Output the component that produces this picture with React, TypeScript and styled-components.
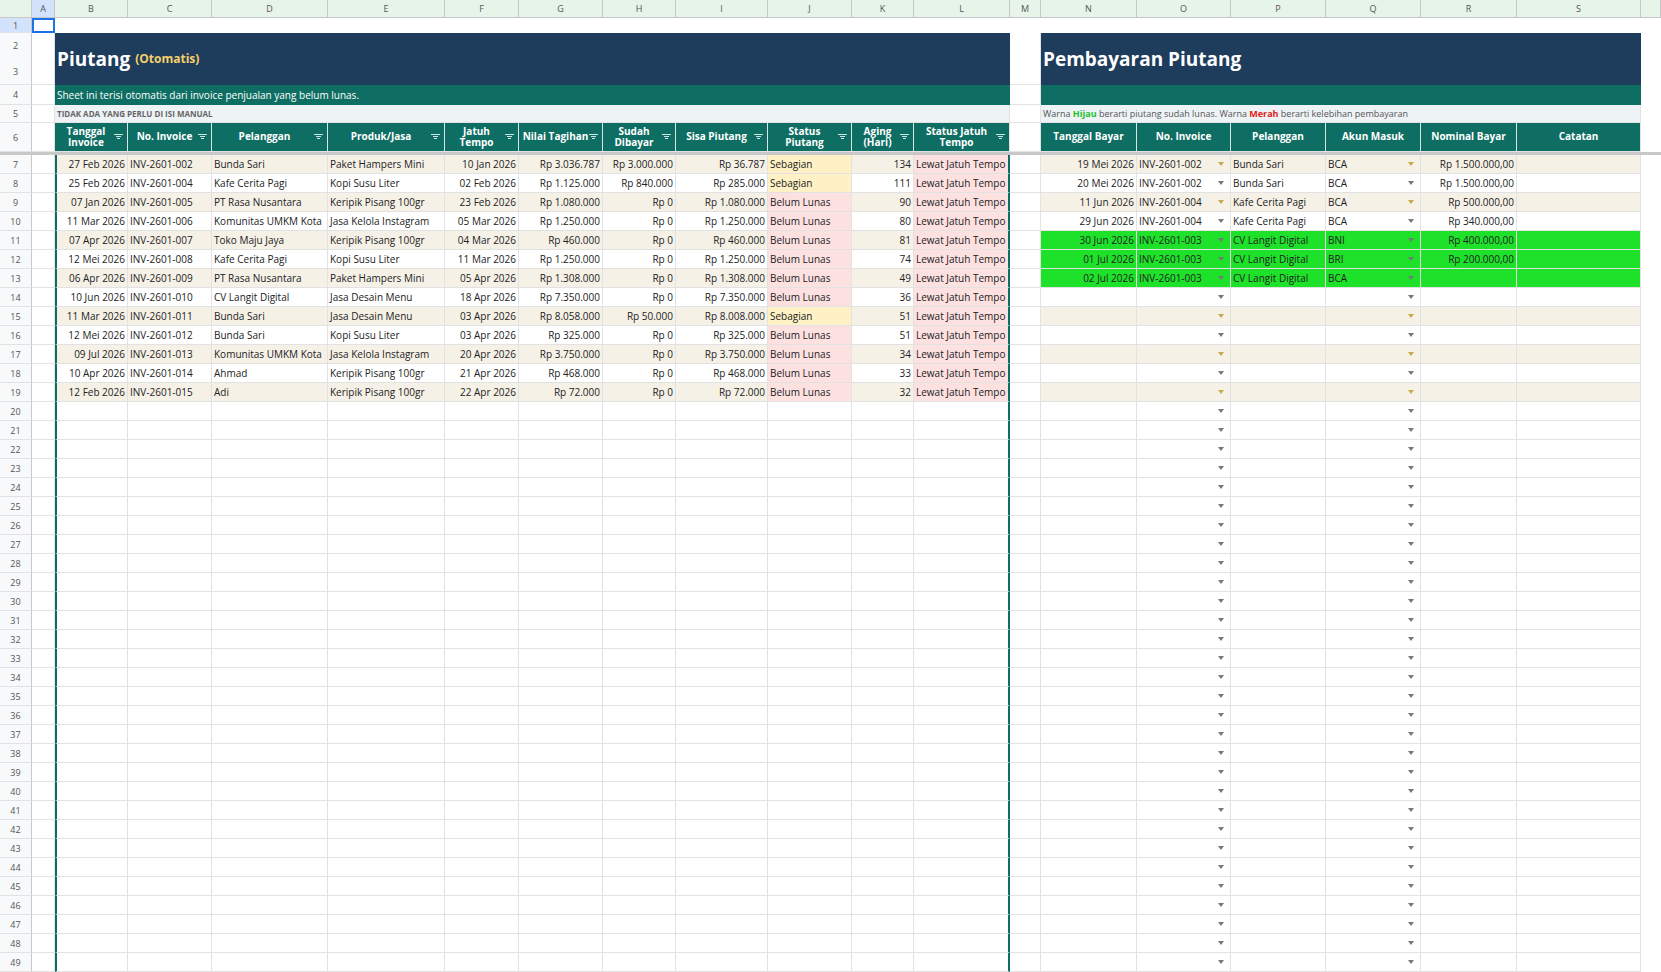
import React from "react";
import styled, { createGlobalStyle } from "styled-components";

const G = createGlobalStyle`
  body{margin:0;background:#fff;font-family:"Open Sans","Noto Sans",sans-serif;overflow:hidden;}
`;
const W = [32,23,73,84,116,117,74,84,73,92,84,62,96,31,96,94,95,95,96,124,20];
const letters = ["","A","B","C","D","E","F","G","H","I","J","K","L","M","N","O","P","Q","R","S",""];
const tpl = W.map(w=>w+"px").join(" ");

const Row = styled.div<{h:number;sep?:boolean}>`
  display:grid;grid-template-columns:${tpl};height:${p=>p.h}px;
  ${p=>p.sep?"border-bottom:3px solid #c8c8c8;":""}
`;
const Cell = styled.div<{bg?:string;align?:string;span?:number;c?:string;b?:boolean;fs?:number;nb?:boolean}>`
  grid-column:span ${p=>p.span||1};
  background:${p=>p.bg||"#fff"};
  border-right:1px solid ${p=>p.nb?"transparent":"#e2e2e2"};
  border-bottom:1px solid ${p=>p.nb?"transparent":"#e2e2e2"};
  display:flex;align-items:center;justify-content:${p=>p.align==="r"?"flex-end":p.align==="c"?"center":"flex-start"};
  padding:0 2px;box-sizing:border-box;overflow:hidden;white-space:nowrap;position:relative;
  font-size:${p=>p.fs||10}px;color:${p=>p.c||"#222"};font-weight:${p=>p.b?700:400};
`;
const RowHead = styled(Cell)<{sel?:boolean}>`
  background:${p=>p.sel?"#d3e3fd":"#f8f9fa"};justify-content:center;font-size:9px;color:#555;border-right:1px solid #c7c7c7;
`;
const RowHead2 = styled(RowHead)`flex-direction:column;justify-content:space-around;`;
const ColHead = styled(Cell)<{sel?:boolean}>`
  background:${p=>p.sel?"#d3e3fd":"#e6f4ea"};justify-content:center;font-size:9px;color:#555;border-right:1px solid #c7c7c7;border-bottom:1px solid #c7c7c7;
`;
const Hdr = styled(Cell)`
  background:#0f6e63;color:#fff;font-weight:700;justify-content:center;text-align:center;line-height:1.15;border-right:1px solid #d9e6e3;font-size:10px;padding-right:12px;
`;
const Filter = styled.span`
  position:absolute;right:4px;top:50%;transform:translateY(-50%);width:9px;height:6px;
  background:linear-gradient(#cfe5e0,#cfe5e0) 0 0/9px 1px no-repeat,linear-gradient(#cfe5e0,#cfe5e0) 2px 2px/5px 1px no-repeat,linear-gradient(#cfe5e0,#cfe5e0) 3px 4px/3px 1px no-repeat;
`;
const Arrow = styled.span<{c?:string}>`
  position:absolute;right:6px;top:50%;margin-top:-2px;border-left:3px solid transparent;border-right:3px solid transparent;border-top:4px solid ${p=>p.c||"#777"};
`;
const Title = styled.span`font-size:19px;font-weight:700;color:#fff;`;
const Sub = styled.span`font-size:12px;color:#f6d06a;font-weight:700;margin-left:5px;`;

const left = [
["27 Feb 2026","INV-2601-002","Bunda Sari","Paket Hampers Mini","10 Jan 2026","Rp 3.036.787","Rp 3.000.000","Rp 36.787","Sebagian","134"],
["25 Feb 2026","INV-2601-004","Kafe Cerita Pagi","Kopi Susu Liter","02 Feb 2026","Rp 1.125.000","Rp 840.000","Rp 285.000","Sebagian","111"],
["07 Jan 2026","INV-2601-005","PT Rasa Nusantara","Keripik Pisang 100gr","23 Feb 2026","Rp 1.080.000","Rp 0","Rp 1.080.000","Belum Lunas","90"],
["11 Mar 2026","INV-2601-006","Komunitas UMKM Kota","Jasa Kelola Instagram","05 Mar 2026","Rp 1.250.000","Rp 0","Rp 1.250.000","Belum Lunas","80"],
["07 Apr 2026","INV-2601-007","Toko Maju Jaya","Keripik Pisang 100gr","04 Mar 2026","Rp 460.000","Rp 0","Rp 460.000","Belum Lunas","81"],
["12 Mei 2026","INV-2601-008","Kafe Cerita Pagi","Kopi Susu Liter","11 Mar 2026","Rp 1.250.000","Rp 0","Rp 1.250.000","Belum Lunas","74"],
["06 Apr 2026","INV-2601-009","PT Rasa Nusantara","Paket Hampers Mini","05 Apr 2026","Rp 1.308.000","Rp 0","Rp 1.308.000","Belum Lunas","49"],
["10 Jun 2026","INV-2601-010","CV Langit Digital","Jasa Desain Menu","18 Apr 2026","Rp 7.350.000","Rp 0","Rp 7.350.000","Belum Lunas","36"],
["11 Mar 2026","INV-2601-011","Bunda Sari","Jasa Desain Menu","03 Apr 2026","Rp 8.058.000","Rp 50.000","Rp 8.008.000","Sebagian","51"],
["12 Mei 2026","INV-2601-012","Bunda Sari","Kopi Susu Liter","03 Apr 2026","Rp 325.000","Rp 0","Rp 325.000","Belum Lunas","51"],
["09 Jul 2026","INV-2601-013","Komunitas UMKM Kota","Jasa Kelola Instagram","20 Apr 2026","Rp 3.750.000","Rp 0","Rp 3.750.000","Belum Lunas","34"],
["10 Apr 2026","INV-2601-014","Ahmad","Keripik Pisang 100gr","21 Apr 2026","Rp 468.000","Rp 0","Rp 468.000","Belum Lunas","33"],
["12 Feb 2026","INV-2601-015","Adi","Keripik Pisang 100gr","22 Apr 2026","Rp 72.000","Rp 0","Rp 72.000","Belum Lunas","32"],
];
const right = [
["19 Mei 2026","INV-2601-002","Bunda Sari","BCA","Rp  1.500.000,00"],
["20 Mei 2026","INV-2601-002","Bunda Sari","BCA","Rp  1.500.000,00"],
["11 Jun 2026","INV-2601-004","Kafe Cerita Pagi","BCA","Rp  500.000,00"],
["29 Jun 2026","INV-2601-004","Kafe Cerita Pagi","BCA","Rp  340.000,00"],
["30 Jun 2026","INV-2601-003","CV Langit Digital","BNI","Rp  400.000,00"],
["01 Jul 2026","INV-2601-003","CV Langit Digital","BRI","Rp  200.000,00"],
["02 Jul 2026","INV-2601-003","CV Langit Digital","BCA",""],
];
const CREAM="#f6f1e7", GREEN="#1ee12a", NAVY="#1e3d5c", TEAL="#0f6e63";
const edgeL = {borderLeft:`2px solid ${TEAL}`};

export default function App(){
  const rows:React.ReactNode[]=[];
  for(let r=7;r<=49;r++){
    const i=r-7; const L=left[i]; const R=right[i];
    const stripe = i%2===0 && r<=19 ? CREAM : "#fff";
    const rg = R && i>=4 ? GREEN : stripe;
    const arrowC = stripe===CREAM && !(R&&i>=4)?"#c9a84d":"#777";
    const jbg = L ? (L[8]==="Sebagian"?"#fdf1c5":"#fde1e1") : "#fff";
    rows.push(
      <Row h={19} key={r}>
        <RowHead>{r}</RowHead>
        <Cell/>
        <Cell bg={stripe} align="r" style={edgeL}>{L?.[0]}</Cell>
        <Cell bg={stripe}>{L?.[1]}</Cell>
        <Cell bg={stripe}>{L?.[2]}</Cell>
        <Cell bg={stripe}>{L?.[3]}</Cell>
        <Cell bg={stripe} align="r">{L?.[4]}</Cell>
        <Cell bg={stripe} align="r">{L?.[5]}</Cell>
        <Cell bg={stripe} align="r">{L?.[6]}</Cell>
        <Cell bg={stripe} align="r">{L?.[7]}</Cell>
        <Cell bg={jbg}>{L?.[8]}</Cell>
        <Cell bg={stripe} align="r">{L?.[9]}</Cell>
        <Cell bg={L?"#fde1e1":"#fff"} style={{borderRight:`2px solid ${TEAL}`}}>{L?"Lewat Jatuh Tempo":""}</Cell>
        <Cell/>
        <Cell bg={rg} align="r">{R?.[0]}</Cell>
        <Cell bg={rg}>{R?.[1]}<Arrow c={arrowC}/></Cell>
        <Cell bg={rg}>{R?.[2]}</Cell>
        <Cell bg={rg}>{R?.[3]}<Arrow c={arrowC}/></Cell>
        <Cell bg={rg} align="r">{R?.[4]}</Cell>
        <Cell bg={rg}/>
        <Cell nb/>
      </Row>
    );
  }
  const lh:[string,string?][] = [["Tanggal","Invoice"],["No. Invoice"],["Pelanggan"],["Produk/Jasa"],["Jatuh","Tempo"],["Nilai Tagihan"],["Sudah","Dibayar"],["Sisa Piutang"],["Status","Piutang"],["Aging","(Hari)"],["Status Jatuh","Tempo"]];
  const rh = ["Tanggal Bayar","No. Invoice","Pelanggan","Akun Masuk","Nominal Bayar","Catatan"];
  return (<>
    <G/>
    <Row h={18}>{letters.map((l,k)=><ColHead key={k} sel={l==="A"}>{l}</ColHead>)}</Row>
    <Row h={15}><RowHead sel>1</RowHead><Cell style={{border:"2px solid #1a73e8"}}/><Cell span={19} nb/></Row>
    <Row h={52}>
      <RowHead2><span>2</span><span>3</span></RowHead2><Cell/>
      <Cell span={11} bg={NAVY} nb><Title>Piutang</Title><Sub>(Otomatis)</Sub></Cell>
      <Cell/>
      <Cell span={6} bg={NAVY} nb><Title>Pembayaran Piutang</Title></Cell><Cell nb/>
    </Row>
    <Row h={20}>
      <RowHead>4</RowHead><Cell/>
      <Cell span={11} bg={TEAL} c="#fff" nb>Sheet ini terisi otomatis dari invoice penjualan yang belum lunas.</Cell>
      <Cell/><Cell span={6} bg={TEAL} nb/><Cell nb/>
    </Row>
    <Row h={18}>
      <RowHead>5</RowHead><Cell/>
      <Cell span={11} bg="#eef3f6" c="#666" b fs={8}>TIDAK ADA YANG PERLU DI ISI MANUAL</Cell>
      <Cell/>
      <Cell span={6} bg="#eef3f6" c="#555" fs={9}>Warna&nbsp;<b style={{color:"#22c02a"}}>Hijau</b>&nbsp;berarti piutang sudah lunas. Warna&nbsp;<b style={{color:"#e01b1b"}}>Merah</b>&nbsp;berarti kelebihan pembayaran</Cell><Cell nb/>
    </Row>
    <Row h={29} sep>
      <RowHead>6</RowHead><Cell/>
      {lh.map(h=><Hdr key={h[0]}><span>{h[0]}{h[1]&&<><br/>{h[1]}</>}</span><Filter/></Hdr>)}
      <Cell/>
      {rh.map(h=><Hdr key={h+"r"} style={{paddingRight:2}}>{h}</Hdr>)}<Cell nb/>
    </Row>
    {rows}
  </>);
}
